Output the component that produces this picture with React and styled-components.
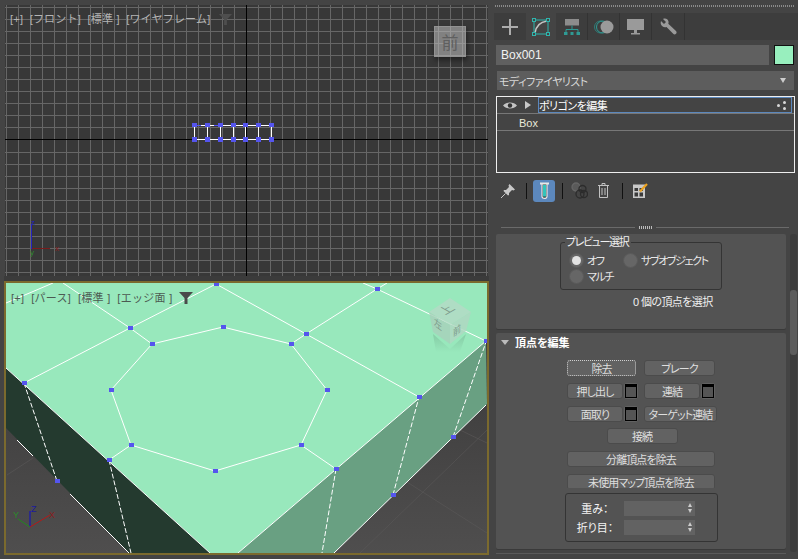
import React from 'react';
import styled, { createGlobalStyle } from 'styled-components';

const GlobalStyle = createGlobalStyle`
    html, body {
        margin: 0;
        padding: 0;
        background: #444444;
    }
    * {
        box-sizing: border-box;
    }
`;

const FONT = `"Liberation Sans", "Noto Sans CJK JP", sans-serif`;

const Screen = styled.div`
    width: 798px;
    height: 559px;
    display: flex;
    overflow: hidden;
    background: #444444;
    font-family: ${FONT};
    font-size: 11px;
    color: #dddddd;
`;

// ---- left column: the two viewports

const Viewports = styled.div`
    width: 494px;
    flex: none;
    display: flex;
    flex-direction: column;
`;

const FrontView = styled.div`
    position: relative;
    margin: 5px 0 0 5px;
    width: 483px;
    height: 271px;
    background: #383838;
`;

const Gutter = styled.div`
    margin-left: 4px;
    width: 485px;
    height: 5px;
    background: #3b3b3b;
`;

const PerspView = styled.div`
    position: relative;
    margin-left: 4px;
    width: 485px;
    height: 274px;
    border: 2px solid #7b6a2e;
    background: #98e8bc;
`;

const Canvas = styled.svg`
    display: block;
    width: 100%;
    height: 100%;
`;

const ViewLabel = styled.div`
    position: absolute;
    left: ${p => p.$left}px;
    top: ${p => p.$top}px;
    display: flex;
    align-items: center;
    white-space: nowrap;
    line-height: 14px;
    color: ${p => p.$color};
    letter-spacing: ${p => p.$spacing}px;
`;

const FilterIcon = ({ color, size = 14, gap = 6 }) => (
    <svg width={size} height={size} viewBox='0 0 14 14' style={{ marginLeft: gap }}>
        <path d='M0 1h14L8.500 7v6h-3V7z' fill={color} />
    </svg>
);

const FrontCube = styled.div`
    position: absolute;
    left: 429px;
    top: 21px;
    width: 32px;
    height: 31px;
    display: flex;
    align-items: center;
    justify-content: center;
    background: rgba(190, 190, 190, 0.55);
    border: 1px solid rgba(150, 150, 150, 0.8);
    box-shadow: 1px 3px 5px rgba(0, 0, 0, 0.45);
    color: #5f5f5f;
    font-family: "Noto Sans CJK JP", sans-serif;
    font-size: 17px;
`;

const range = (n, start, step) => Array.from({ length: n }, (_, i) => start + i * step);

const GRID_X = range(41, 6, 12).filter(x => x !== 246 && x < 488);
const GRID_Y = [...range(11, 7, 12), ...range(11, 152, 12)];
const FRONT_X = [194, 207, 220, 233, 245, 258, 271];

const FrontScene = () => (
    <Canvas viewBox='5 5 483 271' shapeRendering='crispEdges'>
        {GRID_X.map(x => <line key={x} x1={x + 0.5} y1='5' x2={x + 0.5} y2='276' stroke='#666666' />)}
        {GRID_Y.map(y => <line key={y} x1='5' y1={y + 0.5} x2='488' y2={y + 0.5} stroke='#666666' />)}
        <line x1='246.5' y1='5' x2='246.5' y2='276' stroke='#000000' />
        <line x1='5' y1='139.5' x2='488' y2='139.5' stroke='#000000' />
        <rect x='194.5' y='125.5' width='77' height='14' fill='none' stroke='#ffffff' />
        {FRONT_X.map(x => <line key={x} x1={x + 0.5} y1='125' x2={x + 0.5} y2='139' stroke='#ffffff' />)}
        <rect x='194' y='125' width='7' height='1' fill='#5555ee' />
        <rect x='214' y='125' width='7' height='1' fill='#5555ee' />
        {FRONT_X.map(x => (
            <g key={x} fill='#5555ee'>
                <rect x={x - 2} y='123' width='5' height='4' />
                <rect x={x - 2} y='137' width='5' height='5' />
            </g>
        ))}
        <line x1='31.5' y1='224' x2='31.5' y2='249' stroke='#2222c0' />
        <line x1='32' y1='248.5' x2='50' y2='248.5' stroke='#7a1c1c' />
        <text x='31' y='225' fontSize='8' fill='#2222c0' fontFamily='Liberation Sans'>z</text>
        <text x='55' y='251' fontSize='8' fill='#8a2020' fontFamily='Liberation Sans'>x</text>
        <text x='30' y='255' fontSize='8' fill='#2f8a2f' fontFamily='Liberation Sans'>y</text>
    </Canvas>
);

const EDGES = [
    [6, 303, 53, 283], [63, 283, 130, 328], [130, 328, 216, 284], [130, 328, 24, 383],
    [130, 328, 152, 344], [152, 344, 223, 327], [223, 327, 291, 344], [291, 344, 306, 334],
    [306, 334, 377, 289], [216, 284, 306, 334], [363, 283, 377, 289], [377, 289, 387, 283],
    [377, 289, 486, 341], [306, 334, 419, 397], [152, 344, 111, 390], [111, 390, 131, 445],
    [131, 445, 215, 471], [215, 471, 301, 445], [301, 445, 327, 390], [327, 390, 291, 344],
    [131, 445, 109, 460], [301, 445, 336, 469],
    // silhouette of the box
    [6, 368, 210, 553], [238, 553, 486, 341], [334, 553, 486, 405],
    [17, 440, 33, 456], [70, 494, 129, 553],
];

const DASHES = [
    [24, 383, 57, 481], [109, 460, 131, 553], [336, 469, 322, 553],
    [393, 495, 419, 397], [453, 437, 486, 342],
];

const VERTS = [
    [130, 328], [152, 344], [223, 327], [291, 344], [306, 334], [377, 289], [216, 284],
    [111, 390], [327, 390], [24, 383], [131, 445], [301, 445], [215, 471], [109, 460],
    [336, 469], [57, 481], [393, 495], [453, 437], [486, 341], [419, 397],
];

const PerspScene = () => (
    <Canvas viewBox='6 283 481 270'>
        <defs>
            <linearGradient id='ground' x1='0' y1='0' x2='0' y2='1'>
                <stop offset='0' stopColor='#363535' />
                <stop offset='1' stopColor='#4f4e4e' />
            </linearGradient>
            <linearGradient id='cubeShade' x1='0' y1='0' x2='0' y2='1'>
                <stop offset='0' stopColor='#000000' stopOpacity='0.12' />
                <stop offset='1' stopColor='#000000' stopOpacity='0' />
            </linearGradient>
        </defs>
        <rect x='6' y='283' width='481' height='270' fill='url(#ground)' />
        <path d='M487 533L407 482M487 443L460 430M487 430L360 553M7 475L33 458' stroke='#5a5959' strokeWidth='0.6' />
        <path d='M6 283H487V341L238 553H210L6 368z' fill='#98e8bc' />
        <path d='M6 368L210 553H129L6 428z' fill='#243a2f' />
        <path d='M238 553L486 341L487 404L334 553z' fill='#69a082' />
        {EDGES.map(([a, b, c, d]) => (
            <line key={`${a}-${b}-${c}`} x1={a} y1={b} x2={c} y2={d} stroke='#ffffff' strokeWidth='1' />
        ))}
        {DASHES.map(([a, b, c, d]) => (
            <line key={`${a}-${b}`} x1={a} y1={b} x2={c} y2={d} stroke='#ffffff' strokeWidth='1' strokeDasharray='5 2' />
        ))}
        {VERTS.map(([x, y]) => <rect key={`${x}-${y}`} x={x - 2} y={y - 2} width='5' height='4' fill='#5555ee' />)}

        <path d='M433 334L450 349L466 334L460 352L436 352z' fill='url(#cubeShade)' />
        <g opacity='0.85'>
            <path d='M429 312L450 298L471 312L450 325z' fill='#b4dcc6' />
            <path d='M429 312L450 325L450 344L433 332z' fill='#a8d2bb' />
            <path d='M450 325L471 312L466 331L450 344z' fill='#b0d8c2' />
        </g>
        <g fill='#7d9a8b' fontFamily='Noto Sans CJK JP'>
            <text transform='matrix(0.9 -0.5 0.9 0.5 445 315)' fontSize='12'>上</text>
            <text transform='matrix(0.8 0.6 0 1 434 325)' fontSize='10'>左</text>
            <text transform='matrix(0.8 -0.6 0 1 453 337)' fontSize='10'>前</text>
        </g>

        <line x1='30' y1='527' x2='30' y2='511' stroke='#0d0dc8' strokeWidth='1' />
        <line x1='30' y1='527' x2='50' y2='515' stroke='#b51818' strokeWidth='1' />
        <line x1='30' y1='527' x2='18' y2='519' stroke='#1f8a1f' strokeWidth='1' />
        <g fontSize='9' fontFamily='Liberation Sans'>
            <text x='31' y='512' fill='#1a1a9c'>Z</text>
            <text x='49' y='518' fill='#8a2020'>X</text>
            <text x='13' y='518' fill='#2a8a2a'>Y</text>
        </g>
    </Canvas>
);

// ---- right column: command panel

const Side = styled.div`
    width: 304px;
    flex: none;
    display: flex;
    flex-direction: column;
    font-feature-settings: "palt";
`;

const DottedBar = styled.div`
    margin: 5px 3px 0 1px;
    height: 2px;
    background: repeating-linear-gradient(90deg, #8a8a8a 0 1px, transparent 1px 2px);
`;

const Tabs = styled.div`
    margin-top: 6px;
    height: 27px;
    display: flex;
    background: #3d3d3d;
`;

const Tab = styled.div`
    width: ${p => p.$w}px;
    display: flex;
    align-items: center;
    justify-content: center;
    background: ${p => (p.$active ? '#444444' : 'transparent')};
    border-right: ${p => (p.$line ? '1px solid #333333' : 'none')};
`;

const NameRow = styled.div`
    margin: 5px 4px 0 2px;
    display: flex;
    gap: 5px;
`;

const NameField = styled.div`
    flex: 1;
    height: 20px;
    padding-left: 5px;
    display: flex;
    align-items: center;
    background: #606060;
    color: #f2f2f2;
    font-size: 12px;
`;

const Swatch = styled.div`
    width: 20px;
    height: 20px;
    background: #98efbe;
    border: 1px solid #111111;
`;

const Dropdown = styled.div`
    margin: 6px 4px 0 3px;
    height: 19px;
    padding: 0 8px 0 2px;
    display: flex;
    align-items: center;
    justify-content: space-between;
    background: #5d5d5d;
    color: #d8d8d8;
    letter-spacing: -0.5px;
`;

const ArrowDown = styled.span`
    width: 0;
    height: 0;
    border-left: 3.5px solid transparent;
    border-right: 3.5px solid transparent;
    border-top: 5px solid #cccccc;
`;

const StackList = styled.div`
    margin: 6px 3px 0 2px;
    height: 77px;
    border: 1px solid #eeeeee;
    background: #444444;
`;

const StackTop = styled.div`
    height: 17px;
    display: flex;
    align-items: center;
    border-bottom: 1px solid #777777;
`;

const StackIcons = styled.div`
    width: 41px;
    padding-left: 6px;
    display: flex;
    align-items: center;
    gap: 8px;
`;

const StackSelected = styled.div`
    flex: 1;
    height: 16px;
    margin-right: 2px;
    padding-right: 4px;
    display: flex;
    align-items: center;
    justify-content: space-between;
    border: 1px solid #5c88bd;
    color: #ffffff;
    letter-spacing: -0.5px;
`;

const StackBase = styled.div`
    height: 17px;
    padding: 1px 0 0 22px;
    display: flex;
    align-items: center;
    border-bottom: 1px solid #777777;
    color: #e8e8d8;
`;

const Toolbar = styled.div`
    margin: 6px 0 0 3px;
    height: 23px;
    display: flex;
    align-items: center;
`;

const ToolSlot = styled.div`
    width: ${p => p.$w}px;
    height: 22px;
    display: flex;
    align-items: center;
    justify-content: center;
    border-radius: 3px;
    background: ${p => (p.$active ? '#5c88bd' : 'transparent')};
`;

const ToolSep = styled.div`
    width: 1px;
    height: 16px;
    margin: 0 6px 0 ${p => p.$left}px;
    background: #111111;
`;

const Splitter = styled.div`
    margin: 22px 9px 0 7px;
    height: 6px;
    display: flex;
    align-items: center;
    gap: 4px;
    &::before, &::after {
        content: '';
        flex: 1;
        height: 1px;
        background: #6a6a6a;
    }
`;

const SplitDots = styled.span`
    width: 13px;
    height: 3px;
    background: repeating-linear-gradient(90deg, #bbbbbb 0 1px, transparent 1px 2px);
`;

const Rollouts = styled.div`
    margin: 4px 0 0 2px;
    height: 325px;
    display: flex;
    gap: 3px;
`;

const RolloutColumn = styled.div`
    width: 290px;
    display: flex;
    flex-direction: column;
    gap: 4px;
`;

const Rollout = styled.div`
    height: ${p => p.$h}px;
    flex: none;
    border-radius: 2px;
    background: #535353;
    box-shadow: 0 1px 0 #3a3a3a;
`;

const GroupBox = styled.div`
    position: relative;
    margin: 8px 0 0 64px;
    width: 162px;
    height: 48px;
    padding: 9px 0 0 8px;
    border: 1px solid #343434;
    border-radius: 3px;
`;

const GroupTitle = styled.span`
    position: absolute;
    left: 4px;
    top: -8px;
    padding: 0 3px 0 1px;
    line-height: 14px;
    background: #535353;
    color: #f0f0f0;
    letter-spacing: -1.400px;
`;

const RadioGrid = styled.div`
    display: grid;
    grid-template-columns: 54px 1fr;
    grid-auto-rows: 16px;
`;

const RadioItem = styled.div`
    display: flex;
    align-items: center;
    gap: 3px;
    white-space: nowrap;
    color: #e8e8e8;
    letter-spacing: -1.400px;
`;

const RadioDot = styled.span`
    width: 15px;
    height: 15px;
    display: flex;
    align-items: center;
    justify-content: center;
    border-radius: 50%;
    background: #666666;
    border: 1px solid #5a5a5a;
    &::after {
        content: '';
        width: 9px;
        height: 9px;
        border-radius: 50%;
        background: ${p => (p.$on ? '#e2e2e2' : 'transparent')};
    }
`;

const CountText = styled.div`
    margin: 4px 0 0 137px;
    line-height: 16px;
    color: #f0f0f0;
    white-space: nowrap;
    letter-spacing: -0.600px;
`;

const RolloutHead = styled.div`
    height: 18px;
    padding: 0 8px 0 5px;
    display: flex;
    align-items: center;
    font-weight: 700;
    color: #ffffff;
`;

const HeadTriangle = styled.span`
    width: 0;
    height: 0;
    margin-right: 6px;
    border-left: 4px solid transparent;
    border-right: 4px solid transparent;
    border-top: 5px solid #bbbbbb;
`;

const GripDots = styled.span`
    margin-left: auto;
    width: 6px;
    height: 6px;
    background: radial-gradient(circle, #777777 0.6px, transparent 0.7px) 0 0 / 2px 2px;
`;

const Commands = styled.div`
    margin: 9px 0 0 71px;
    width: 150px;
    display: flex;
    flex-direction: column;
    gap: 6.8px;
`;

const CmdRow = styled.div`
    height: ${p => p.$h || 16}px;
    display: flex;
    justify-content: ${p => (p.$center ? 'center' : 'flex-start')};
    overflow: hidden;
`;

const Cmd = styled.div`
    width: ${p => p.$w}px;
    height: 16px;
    margin-right: ${p => p.$mr || 0}px;
    display: flex;
    align-items: center;
    justify-content: center;
    flex: none;
    white-space: nowrap;
    letter-spacing: -0.900px;
    border-radius: 3px;
    background: #626262;
    border: ${p => (p.$focus ? '1px dotted #cfcfcf' : '1px solid #4b4b4b')};
    color: #dedede;
`;

const SettingsBtn = styled.div`
    width: 14px;
    height: 16px;
    margin-right: ${p => p.$mr || 0}px;
    flex: none;
    display: flex;
    align-items: center;
    justify-content: center;
    border-radius: 3px;
    background: #626262;
    &::after {
        content: '';
        width: 10px;
        height: 10px;
        border: 1px solid #000000;
        border-top-width: 3px;
        background: #555555;
    }
`;

const SpinGroup = styled.div`
    margin: 5px 0 0 69px;
    width: 153px;
    height: 49px;
    padding: 7px 0 0 0;
    display: grid;
    grid-template-columns: 58px 71px;
    grid-auto-rows: 15px;
    row-gap: 4px;
    align-items: center;
    border: 1px solid #343434;
    border-radius: 3px;
`;

const SpinLabel = styled.span`
    text-align: center;
    color: #f4f4f4;
    white-space: nowrap;
`;

const Spinner = styled.div`
    height: 15px;
    padding-right: 3px;
    display: flex;
    flex-direction: column;
    align-items: flex-end;
    justify-content: center;
    gap: 2px;
    background: #626262;
`;

const SpinArrow = styled.span`
    width: 0;
    height: 0;
    border-left: 2.5px solid transparent;
    border-right: 2.5px solid transparent;
    ${p => (p.$up ? 'border-bottom: 4px solid #cccccc;' : 'border-top: 4px solid #cccccc;')}
`;

const ScrollTrack = styled.div`
    width: 7px;
    height: 318px;
    margin-left: 1px;
    padding-top: 56px;
    border-radius: 3px;
    background: #3c3c3c;
`;

const ScrollThumb = styled.div`
    height: 65px;
    border-radius: 3px;
    background: #5c5c5c;
`;

const NextRollout = styled.div`
    height: 1px;
    background: #5a5a5a;
`;

// ---- icons

const PlusIcon = () => (
    <svg width='16' height='16' viewBox='0 0 16 16'>
        <path d='M8 0v16M0 8h16' stroke='#adadad' strokeWidth='2' />
    </svg>
);

const ModifyIcon = () => (
    <svg width='18' height='18' viewBox='0 0 18 18' fill='none'>
        <rect x='2' y='2' width='14' height='14' stroke='#2fb5ad' />
        <path d='M3 15C4 8 8 4 15 3' stroke='#c4c4c4' strokeWidth='1.600' />
        <g fill='#444444' stroke='#2fb5ad'>
            <rect x='0.500' y='0.500' width='3' height='3' />
            <rect x='14.500' y='0.500' width='3' height='3' />
            <rect x='0.500' y='14.500' width='3' height='3' />
            <rect x='14.500' y='14.500' width='3' height='3' />
        </g>
    </svg>
);

const HierarchyIcon = () => (
    <svg width='16' height='16' viewBox='0 0 16 16'>
        <rect x='1' y='0' width='14' height='6.500' fill='#8c8c8c' />
        <path d='M8 6.500v4M2 14v-3.500h12V14' fill='none' stroke='#2f9a94' />
        <rect x='0' y='13' width='3.500' height='3' fill='#2f9a94' />
        <rect x='6.500' y='13' width='3' height='3' fill='#2f9a94' />
        <rect x='12.500' y='13' width='3.500' height='3' fill='#2f9a94' />
    </svg>
);

const MotionIcon = () => (
    <svg width='20' height='14' viewBox='0 0 20 14'>
        <circle cx='6.500' cy='7' r='6' fill='none' stroke='#2f7f7a' />
        <circle cx='8.500' cy='7' r='6' fill='none' stroke='#2f9a94' />
        <circle cx='13' cy='7' r='6.500' fill='#9a9a9a' />
    </svg>
);

const DisplayIcon = () => (
    <svg width='17' height='16' viewBox='0 0 17 16'>
        <rect x='0' y='0' width='17' height='11' fill='#9a9a9a' />
        <rect x='7' y='11' width='3' height='3' fill='#9a9a9a' />
        <rect x='4' y='14' width='9' height='1.500' fill='#9a9a9a' />
    </svg>
);

const WrenchIcon = () => (
    <svg width='17' height='17' viewBox='0 0 17 17'>
        <path d='M1 3l3 3 2-2-3-3c2.500-1 5 0 5.500 2.500.2 1 0 1.800-.2 2.300L16 13c.8 1 .8 2 0 2.800-.8.800-2 .8-2.800 0L6.500 9C4 9.800 1.500 8.500.8 6 .6 5 .7 4 1 3z' fill='#9a9a9a' />
    </svg>
);

const EyeIcon = () => (
    <svg width='14' height='9' viewBox='0 0 14 9'>
        <path d='M0 4.500C3 .5 11 .5 14 4.500C11 8.500 3 8.500 0 4.500z' fill='#c4c4c4' />
        <circle cx='7' cy='4.500' r='2.200' fill='#333333' />
    </svg>
);

const PlayIcon = () => (
    <svg width='6' height='8' viewBox='0 0 6 8'>
        <path d='M0 0l6 4-6 4z' fill='#c8c8c8' />
    </svg>
);

const SubDotsIcon = () => (
    <svg width='10' height='9' viewBox='0 0 10 9' fill='#d8d8d8'>
        <circle cx='1.500' cy='4.500' r='1.500' />
        <circle cx='7.500' cy='1.500' r='1.500' />
        <circle cx='7.500' cy='7.500' r='1.500' />
    </svg>
);

const PinIcon = () => (
    <svg width='14' height='14' viewBox='0 0 14 14'>
        <path d='M8.500 0L14 5.500 12.500 6.500 11 6 8 9 8 11 7 11.500 2.500 7 3 6 5 6 8 3 7.500 1.500z' fill='#c8c8c8' />
        <path d='M4.500 9.500L0 14' stroke='#c8c8c8' />
    </svg>
);

const TubeIcon = () => (
    <svg width='9' height='18' viewBox='0 0 9 18'>
        <path d='M2 1.500V14.500C2 17 7 17 7 14.500V1.500' fill='#3a3a3a' stroke='#e8e8e8' strokeWidth='1.200' />
        <rect x='0' y='0.500' width='9' height='2' fill='#e8e8e8' />
        <rect x='3' y='3' width='3' height='11.500' fill='#33c4bb' />
    </svg>
);

const ShapesIcon = () => (
    <svg width='17' height='17' viewBox='0 0 17 17' fill='none' stroke='#2c2c2c' strokeWidth='1.300'>
        <circle cx='5' cy='5' r='4' fill='#5a5a5a' stroke='#666666' />
        <circle cx='11.500' cy='7' r='3.500' />
        <circle cx='9' cy='12' r='4' />
        <circle cx='13' cy='12' r='3.500' />
    </svg>
);

const TrashIcon = () => (
    <svg width='11' height='15' viewBox='0 0 11 15' fill='none' stroke='#c2c2c2'>
        <path d='M0 2.500h11M4 2.500v-2h3v2' />
        <path d='M1.500 2.500v12h8v-12' />
        <path d='M4 5v7M7 5v7' />
    </svg>
);

const ConfigIcon = () => (
    <svg width='16' height='16' viewBox='0 0 16 16'>
        <rect x='1' y='1.500' width='12' height='13.500' fill='#c8c8c8' />
        <g fill='#3a3a3a'>
            <rect x='2.500' y='5' width='3.500' height='3' />
            <rect x='7.500' y='5' width='3.500' height='3' />
            <rect x='2.500' y='9.500' width='3.500' height='4' />
            <rect x='7.500' y='9.500' width='3.500' height='4' />
        </g>
        <path d='M15 1L8 8.500' stroke='#eda31f' strokeWidth='2.200' />
    </svg>
);

const App = () => (
    <Screen>
        <GlobalStyle />
        <Viewports>
            <FrontView>
                <FrontScene />
                <ViewLabel $left={5} $top={7} $color='#b4b4b4' $spacing={0.2}>
                    [+] &nbsp;[フロント] &nbsp;[標準 ] &nbsp;[ワイヤフレーム]
                    <FilterIcon color='#4e4e4e' size={13} gap={9} />
                </ViewLabel>
                <FrontCube>前</FrontCube>
            </FrontView>
            <Gutter />
            <PerspView>
                <PerspScene />
                <ViewLabel $left={5} $top={8} $color='#4c5a52' $spacing={0.3}>
                    [+] &nbsp;[パース] &nbsp;[標準 ] &nbsp;[エッジ面 ]
                    <FilterIcon color='#4a4a4a' />
                </ViewLabel>
            </PerspView>
        </Viewports>
        <Side>
            <DottedBar />
            <Tabs>
                <Tab $w={32}><PlusIcon /></Tab>
                <Tab $w={30} $active><ModifyIcon /></Tab>
                <Tab $w={32} $line><HierarchyIcon /></Tab>
                <Tab $w={32} $line><MotionIcon /></Tab>
                <Tab $w={32} $line><DisplayIcon /></Tab>
                <Tab $w={33} $line><WrenchIcon /></Tab>
            </Tabs>
            <NameRow>
                <NameField>Box001</NameField>
                <Swatch />
            </NameRow>
            <Dropdown>
                モディファイヤリスト
                <ArrowDown />
            </Dropdown>
            <StackList>
                <StackTop>
                    <StackIcons>
                        <EyeIcon />
                        <PlayIcon />
                    </StackIcons>
                    <StackSelected>
                        ポリゴンを編集
                        <SubDotsIcon />
                    </StackSelected>
                </StackTop>
                <StackBase>Box</StackBase>
            </StackList>
            <Toolbar>
                <ToolSlot $w={22}><PinIcon /></ToolSlot>
                <ToolSep $left={7} />
                <ToolSlot $w={22} $active><TubeIcon /></ToolSlot>
                <ToolSep $left={7} />
                <ToolSlot $w={21}><ShapesIcon /></ToolSlot>
                <ToolSlot $w={26}><TrashIcon /></ToolSlot>
                <ToolSep $left={6} />
                <ToolSlot $w={22}><ConfigIcon /></ToolSlot>
            </Toolbar>
            <Splitter><SplitDots /></Splitter>
            <Rollouts>
                <RolloutColumn>
                    <Rollout $h={95}>
                        <GroupBox>
                            <GroupTitle>プレビュー選択</GroupTitle>
                            <RadioGrid>
                                <RadioItem><RadioDot $on />オフ</RadioItem>
                                <RadioItem><RadioDot />サブオブジェクト</RadioItem>
                                <RadioItem><RadioDot />マルチ</RadioItem>
                            </RadioGrid>
                        </GroupBox>
                        <CountText>0 個の頂点を選択</CountText>
                    </Rollout>
                    <Rollout $h={216}>
                        <RolloutHead>
                            <HeadTriangle />
                            頂点を編集
                            <GripDots />
                        </RolloutHead>
                        <Commands>
                            <CmdRow>
                                <Cmd $w={69} $focus $mr={8}>除去</Cmd>
                                <Cmd $w={71}>ブレーク</Cmd>
                            </CmdRow>
                            <CmdRow>
                                <Cmd $w={56} $mr={1}>押し出し</Cmd>
                                <SettingsBtn $mr={6} />
                                <Cmd $w={56} $mr={1}>連結</Cmd>
                                <SettingsBtn />
                            </CmdRow>
                            <CmdRow>
                                <Cmd $w={56} $mr={1}>面取り</Cmd>
                                <SettingsBtn $mr={6} />
                                <Cmd $w={73}>ターゲット連結</Cmd>
                            </CmdRow>
                            <CmdRow $center>
                                <Cmd $w={71}>接続</Cmd>
                            </CmdRow>
                            <CmdRow>
                                <Cmd $w={148}>分離頂点を除去</Cmd>
                            </CmdRow>
                            <CmdRow $h={14}>
                                <Cmd $w={148}>未使用マップ頂点を除去</Cmd>
                            </CmdRow>
                        </Commands>
                        <SpinGroup>
                            <SpinLabel>重み：</SpinLabel>
                            <Spinner><SpinArrow $up /><SpinArrow /></Spinner>
                            <SpinLabel>折り目：</SpinLabel>
                            <Spinner><SpinArrow $up /><SpinArrow /></Spinner>
                        </SpinGroup>
                    </Rollout>
                    <NextRollout />
                </RolloutColumn>
                <ScrollTrack>
                    <ScrollThumb />
                </ScrollTrack>
            </Rollouts>
        </Side>
    </Screen>
);

export default App;
